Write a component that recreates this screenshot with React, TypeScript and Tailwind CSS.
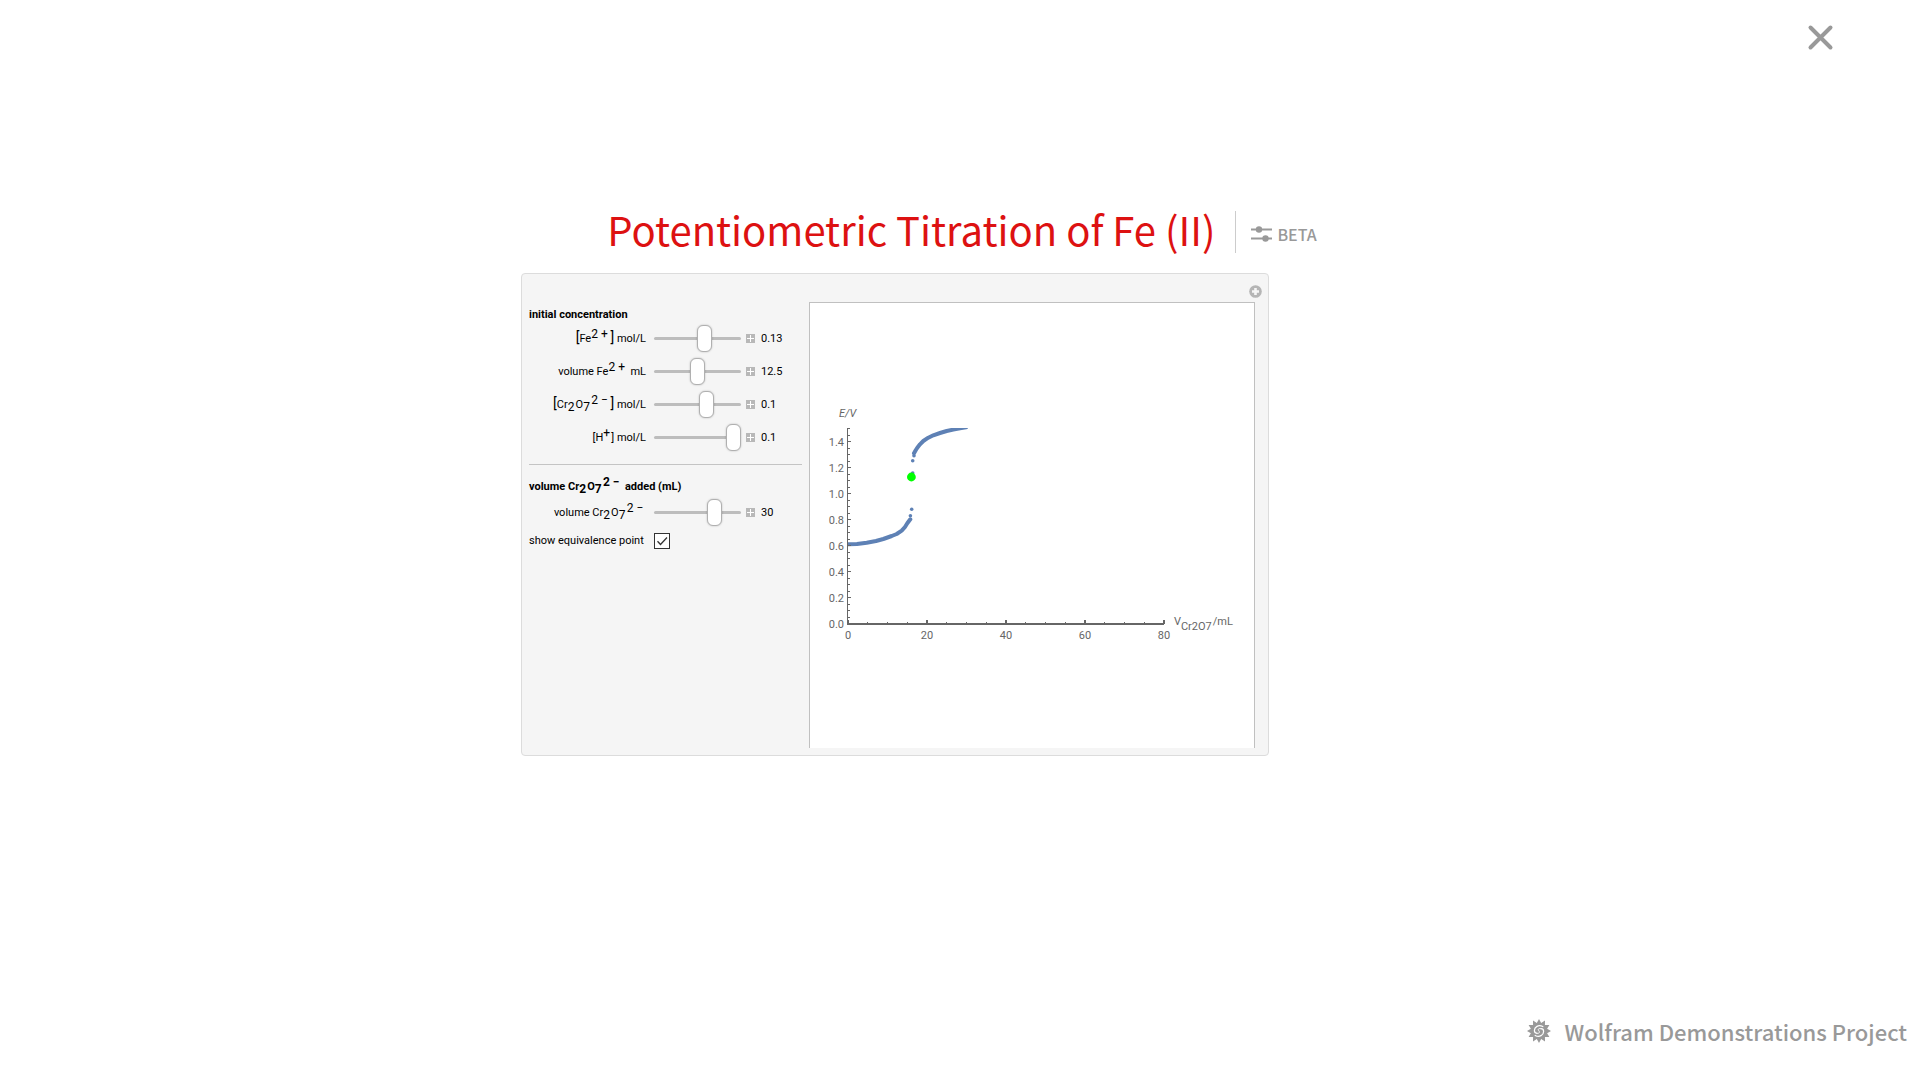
import { useState } from "react";
import type { ReactNode } from "react";

function Sup({ children }: { children: ReactNode }) {
  return <sup className="static align-[4px] text-[12px] leading-[0]">{children}</sup>;
}

function Sub({ children }: { children: ReactNode }) {
  return <sub className="static align-[-3px] text-[12px] leading-[0]">{children}</sub>;
}

function Bracket({ children }: { children: ReactNode }) {
  return <span className="text-[14px] leading-[0]">{children}</span>;
}

function Dichromate() {
  return (
    <>
      Cr<Sub>2</Sub>{"\u200A"}O<Sub>7</Sub>
      <Sup>{"\u200A"}2 −</Sup>
    </>
  );
}

function ExpandButton({ label }: { label: string }) {
  return (
    <button type="button" aria-label={label} className="block size-[9px] bg-[#b8b8b8]">
      <svg viewBox="0 0 9 9" className="block size-[9px]" shapeRendering="crispEdges">
        <path d="M1 4.5H8M4.5 1V8" stroke="#fff" strokeWidth="1" />
      </svg>
    </button>
  );
}

type ControlProps = {
  id: string;
  label: ReactNode;
  name: string;
  min: number;
  max: number;
  initial: number;
};

function Control({ id, label, name, min, max, initial }: ControlProps) {
  const [value, setValue] = useState(initial);
  return (
    <div className="grid h-[33px] grid-cols-[117px_87px_9px_1fr] items-center">
      <label htmlFor={id} className="text-right whitespace-nowrap">
        {label}
      </label>
      <input
        id={id}
        type="range"
        min={min}
        max={max}
        step="any"
        value={value}
        onChange={(e) => setValue(Number(e.target.value))}
        className="ml-2 h-[28px] w-[87px] cursor-pointer appearance-none bg-transparent [&::-webkit-slider-runnable-track]:h-[3px] [&::-webkit-slider-runnable-track]:rounded-full [&::-webkit-slider-runnable-track]:bg-[#bdbdbd] [&::-webkit-slider-thumb]:mt-[-12px] [&::-webkit-slider-thumb]:h-[27px] [&::-webkit-slider-thumb]:w-[15px] [&::-webkit-slider-thumb]:appearance-none [&::-webkit-slider-thumb]:rounded-[6px] [&::-webkit-slider-thumb]:border [&::-webkit-slider-thumb]:border-[#b0b0b0] [&::-webkit-slider-thumb]:bg-white [&::-webkit-slider-thumb]:shadow-[0_0_2px_rgba(0,0,0,0.25)]"
      />
      <div className="ml-[13px]">
        <ExpandButton label={`Expand ${name}`} />
      </div>
      <output htmlFor={id} className="ml-[19px]">
        {Number(value.toPrecision(3))}
      </output>
    </div>
  );
}

const X0 = 38;
const Y0 = 321;
const PX_PER_ML = 3.95;
const PX_PER_VOLT = 130.3;

function Chart() {
  const yMinor = Array.from({ length: 31 }, (_, i) => i * 0.05);
  const xMinor = Array.from({ length: 17 }, (_, i) => i * 5);
  const yLabels = [0, 0.2, 0.4, 0.6, 0.8, 1, 1.2, 1.4];
  const xLabels = [0, 20, 40, 60, 80];
  return (
    <svg
      viewBox="0 0 444 445"
      className="block w-full"
      role="img"
      aria-label="Potential against volume of dichromate"
      fontFamily="Roboto, sans-serif"
      fontSize="11"
      fill="#666"
    >
      <clipPath id="plot">
        <rect x={X0} y="125" width="320" height="200" />
      </clipPath>
      <g clipPath="url(#plot)">
        <g fill="none" stroke="#5e81b5" strokeWidth="4" strokeLinecap="round" strokeLinejoin="round">
          <path d="M38 241.3L47 241L56.7 239.7L66 238L73.3 236L81.7 233L86.7 231L91.7 227.7L95 224L97.3 220.3L100.3 216.3" />
          <path d="M104 150.3L105.7 147.3L107.3 144.7L110 141.3L113.3 138L118.3 134.7L123.3 132.3L130 130L136.7 128L143.3 126.6L150 125.4L156 124.4" />
        </g>
        <g fill="#5e81b5">
          <circle cx="100.4" cy="212.7" r="1.8" />
          <circle cx="101.7" cy="206.3" r="1.8" />
          <circle cx="102.7" cy="170" r="1.8" />
          <circle cx="102.7" cy="157.7" r="1.8" />
          <circle cx="104" cy="152.7" r="1.8" />
        </g>
      </g>
      <circle cx="101.4" cy="174" r="4.4" fill="#0f0" />
      <g stroke="#666" shapeRendering="crispEdges">
        <path d={`M${X0 - 0.5} 125V${Y0 + 1}`} strokeWidth="1" />
        <path d={`M${X0} ${Y0}H${X0 + 316}`} strokeWidth="2" />
        {yMinor.map((v, i) => (
          <path key={i} d={`M${X0} ${Y0 - v * PX_PER_VOLT}h${i % 4 === 0 ? 3 : 2}`} />
        ))}
        {xMinor.map((v, i) => (
          <path
            key={i}
            d={`M${X0 + v * PX_PER_ML} ${Y0}v${i % 4 === 0 ? -4 : -2}`}
            strokeWidth={i % 4 === 0 ? 2 : 1}
          />
        ))}
      </g>
      {yLabels.map((v) => (
        <text key={v} x="34" y={Y0 + 4 - v * PX_PER_VOLT} textAnchor="end">
          {v.toFixed(1)}
        </text>
      ))}
      {xLabels.map((v) => (
        <text key={v} x={X0 + v * PX_PER_ML} y="336" textAnchor="middle">
          {v}
        </text>
      ))}
      <text x="29" y="114" fontStyle="italic">
        E/V
      </text>
      <text x="364" y="322" fontSize="11">
        V<tspan dy="5">Cr2O7</tspan>
        <tspan dy="-5" dx="1">/mL</tspan>
      </text>
    </svg>
  );
}

function WolframMark() {
  const points = Array.from({ length: 24 }, (_, i) => {
    const r = i % 2 === 0 ? 12 : 8.4;
    const a = (i * Math.PI) / 12;
    return `${(12 + r * Math.sin(a)).toFixed(2)},${(12 - r * Math.cos(a)).toFixed(2)}`;
  }).join(" ");
  return (
    <svg viewBox="0 0 24 24" className="block size-6" aria-hidden="true">
      <polygon points={points} fill="#999" />
      <g fill="none" stroke="#fff" strokeLinecap="round">
        <path d="M15.8 7.6C11.500 5.200 7.400 8 7.400 11.600c0 1.700.9 2.700 2.600 2.700" strokeWidth="1.2" />
        <path d="M8.200 16.400c4.300 2.400 8.400-.4 8.400-4 0-1.700-.9-2.700-2.600-2.700" strokeWidth="1.2" />
        <path d="M14 9.700c-2.600-.6-3.400.6-2.200 2 1.300 1.500.6 3-1.800 2.600" strokeWidth="1" />
      </g>
    </svg>
  );
}

export default function App() {
  const [show, setShow] = useState(true);
  return (
    <div className="flex min-h-screen flex-col bg-white font-['Noto_Sans_CJK_SC',sans-serif]">
      <header className="flex justify-end pt-6 pr-[86px]">
        <button type="button" aria-label="Close" className="block">
          <svg viewBox="0 0 27 27" className="block size-[27px]">
            <path d="M3.5 3.5L23.5 23.5M23.5 3.5L3.5 23.5" stroke="#999" strokeWidth="4" strokeLinecap="round" />
          </svg>
        </button>
      </header>

      <main className="mx-auto w-full max-w-[878px] grow pt-[151px]">
        <div className="flex h-[60px] items-center justify-center pl-1">
          <h1 className="pb-1.5 text-[40px] leading-[54px] whitespace-nowrap text-[#dd1111]">
            Potentiometric Titration of Fe (II)
          </h1>
          <span className="ml-5 h-[42px] w-px bg-[#ccc]" />
          <a href="#beta" className="ml-[15px] flex items-center gap-[5px] pt-[3px] text-[16px] leading-6 font-medium text-[#999]">
            <svg viewBox="0 0 21 16" className="block h-4 w-[21px]" aria-hidden="true">
              <path d="M0 3.5H21M0 12.5H21" stroke="#999" strokeWidth="2" />
              <circle cx="8" cy="3.5" r="3.2" fill="#999" />
              <circle cx="14.5" cy="12.5" r="3.2" fill="#999" />
            </svg>
            BETA
          </a>
        </div>

        <section className="mt-[11px] w-[748px] rounded-[4px] border border-[#dcdcdc] bg-[#f5f5f5] pr-[13px] pb-[7px] pl-[7px] font-[Roboto,sans-serif] text-[11px] leading-[14px] text-black">
          <div className="flex h-7 items-center justify-end pt-[7px]">
            <button type="button" aria-label="More options" className="-mr-[7px] block">
              <svg viewBox="0 0 13 13" className="block size-[13px]">
                <circle cx="6.5" cy="6.5" r="6.3" fill="#b5b5b5" />
                <path d="M6.5 3V10M3 6.5H10" stroke="#f5f5f5" strokeWidth="2.6" />
              </svg>
            </button>
          </div>
          <div className="flex gap-[7px]">
            <div className="w-[273px] pt-[6px]">
              <h2 className="font-bold">initial concentration</h2>
              <Control
                id="fe"
                name="iron concentration"
                min={0.01}
                max={0.21}
                initial={0.13}
                label={<><Bracket>[</Bracket>Fe<Sup>2 +</Sup> <Bracket>]</Bracket> mol/L</>}
              />
              <Control
                id="vfe"
                name="iron volume"
                min={5}
                max={20}
                initial={12.5}
                label={<>volume Fe<Sup>2 +</Sup>&nbsp; mL</>}
              />
              <Control
                id="cr"
                name="dichromate concentration"
                min={0}
                max={0.16}
                initial={0.1}
                label={<><Bracket>[</Bracket><Dichromate /> <Bracket>]</Bracket> mol/L</>}
              />
              <Control
                id="h"
                name="acid concentration"
                min={0}
                max={0.1}
                initial={0.1}
                label={<>[H<Sup>+</Sup>{"\u200A"}] mol/L</>}
              />
              <hr className="mt-[10px] border-[#c4c4c4]" />
              <h2 className="mt-[15px] mb-0.5 font-bold">
                volume <Dichromate />&nbsp; added (mL)
              </h2>
              <Control
                id="vcr"
                name="dichromate volume"
                min={0}
                max={41}
                initial={30}
                label={<>volume <Dichromate />&nbsp;</>}
              />
              <div className="mt-1 grid grid-cols-[117px_16px] items-center gap-2">
                <label htmlFor="show" className="whitespace-nowrap">
                  show equivalence point
                </label>
                <div className="grid size-4">
                  <input
                    id="show"
                    type="checkbox"
                    checked={show}
                    onChange={(e) => setShow(e.target.checked)}
                    className="peer col-start-1 row-start-1 size-4 appearance-none border border-[#333] bg-white"
                  />
                  <svg
                    viewBox="0 0 16 16"
                    className="pointer-events-none invisible col-start-1 row-start-1 block size-4 peer-checked:visible"
                    aria-hidden="true"
                  >
                    <path d="M3.5 8.3L6.5 11.5L13 4.5" fill="none" stroke="#333" strokeWidth="1.3" />
                  </svg>
                </div>
              </div>
            </div>
            <div className="h-[446px] min-w-0 grow border-x border-t border-[#c0c0c0] bg-white">
              <Chart />
            </div>
          </div>
        </section>
      </main>

      <footer className="flex justify-end pr-[13px] pb-[31px]">
        <a href="#demonstrations" className="flex items-center gap-[14px] text-[22px] leading-9 font-medium text-[#999]">
          <WolframMark />
          Wolfram Demonstrations Project
        </a>
      </footer>
    </div>
  );
}
